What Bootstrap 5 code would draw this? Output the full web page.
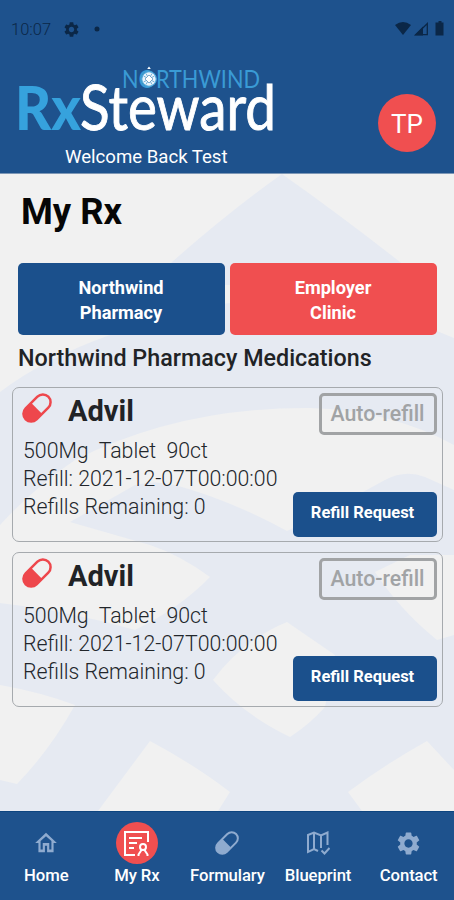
<!DOCTYPE html>
<html lang="en">
<head>
<meta charset="utf-8">
<meta name="viewport" content="width=device-width, initial-scale=1">
<title>My Rx</title>
<link href="https://cdn.jsdelivr.net/npm/bootstrap@5.3.0/dist/css/bootstrap.min.css" rel="stylesheet">
<style>
body{font-family:Roboto,"Liberation Sans",sans-serif;height:900px;overflow:hidden;background:#f1f1f1;color:#212326;line-height:1}
svg{display:block;flex:none}
.top-area{height:174px;background:#1e528d;border-bottom:1px solid #7d97b6;color:#fff}
.status{height:58px;padding:0 9px 0 11px;color:#0b2747}
.clock{font-size:16.5px;font-weight:300;width:53px;padding-top:2px}
.status-dot{margin-left:15px}
.brand-row{height:115px;padding:7px 18px 0 18px}
.wordmark{overflow:visible;font-family:Lato,sans-serif}
.welcome{font-size:18.6px;padding-left:47px;margin-top:13px;white-space:nowrap}
.avatar{width:58px;height:58px;background:#f04f50;font-size:26px;margin-top:29px;padding-top:2px}
.main-area{height:637px}
.backdrop{left:0;top:0;z-index:-1}
.content-col{padding:0 11px 0 12px}
.page-title{font-size:36.4px;font-weight:700;color:#060606;margin:20px 0 0 9px;height:69px;line-height:36px}
.switch-row{gap:5px;padding:0 6px}
.switch-row .btn{height:72px;border:0;border-radius:5px;font-size:18.2px;font-weight:700;line-height:25px;color:#fff;padding:8px 13px 6px 12px}
.fill-blue{background:#1b508c!important}
.fill-red{background:#f04f50!important}
.section-title{font-size:23.3px;font-weight:500;margin:11px 0 17px 6px;line-height:24px;white-space:nowrap}
.med{height:155px;border:1px solid #a6aaae;border-radius:7px;background:transparent;padding:5px 5.5px 4.5px 9px;margin-bottom:9.5px}
.med-name{font-size:29px;font-weight:700;margin-left:16px;line-height:36px}
.auto-btn{width:118px;height:42px;border:3px solid #a2a4a6;border-radius:5px;color:#a1a3a5!important;font-size:21.3px;font-weight:500;opacity:1!important;padding:0;background:#eef0f333}
.med-info{font-size:21.3px;font-weight:300;line-height:28.2px;color:#22262b;white-space:pre;margin:8px 0 0 1px}
.request-btn{width:144px;height:45px;border:0;border-radius:5px;color:#fff;font-size:16.5px;font-weight:700;padding:0 4px 2px 0}
.tabs{height:89px;background:#1e528d;border-top:1px solid #0d4580;padding:10px 0 0 1px}
.tabs a{width:90.6px;color:#fff}
.tab-label{font-size:16.7px;font-weight:500;letter-spacing:-.1px;line-height:23px;white-space:nowrap}
.tab-icon{height:42px;width:42px;color:#8fabcf}
.tab-icon.current{color:#fff;background:#f04f50}
</style>
<script src="https://cdn.jsdelivr.net/npm/bootstrap@5.3.0/dist/js/bootstrap.bundle.min.js"></script>
</head>
<body class="d-flex flex-column">
<svg width="0" height="0" class="position-absolute"><defs>
<symbol id="gear" viewBox="2 2 20 20"><path fill="currentColor" d="M19.14 12.94c.04-.3.06-.61.06-.94 0-.32-.02-.64-.07-.94l2.03-1.58c.18-.14.23-.41.12-.61l-1.92-3.32c-.12-.22-.37-.29-.59-.22l-2.39.96c-.5-.38-1.03-.7-1.62-.94l-.36-2.54c-.04-.24-.24-.41-.48-.41h-3.84c-.24 0-.43.17-.47.41l-.36 2.54c-.59.24-1.13.57-1.62.94l-2.39-.96c-.22-.08-.47 0-.59.22L2.74 8.87c-.12.21-.08.47.12.61l2.03 1.58c-.05.3-.09.63-.09.94s.02.64.07.94l-2.03 1.58c-.18.14-.23.41-.12.61l1.92 3.32c.12.22.37.29.59.22l2.39-.96c.5.38 1.03.7 1.62.94l.36 2.54c.05.24.24.41.48.41h3.84c.24 0 .44-.17.47-.41l.36-2.54c.59-.24 1.13-.56 1.62-.94l2.39.96c.22.08.47 0 .59-.22l1.92-3.32c.12-.22.07-.47-.12-.61l-2.01-1.58zM12 15.6c-1.98 0-3.6-1.62-3.6-3.6s1.62-3.6 3.6-3.6 3.6 1.62 3.6 3.6-1.62 3.6-3.6 3.6z"/></symbol>
<symbol id="pill" viewBox="0 0 30 30"><g transform="rotate(45 15 15)"><rect x="7.300" y="-1" width="15.400" height="32" rx="7.700" fill="none" stroke="currentColor" stroke-width="2.500"/><path d="M7.500 15.500h15v8a7.500 7.500 0 0 1-15 0z" fill="currentColor"/></g></symbol>
</defs></svg>

<header class="top-area flex-shrink-0">
  <div class="status d-flex align-items-center justify-content-between">
    <div class="d-flex align-items-center"><span class="clock">10:07</span>
      <svg width="15" height="15"><use href="#gear"/></svg>
      <svg class="status-dot" width="6" height="6"><circle cx="3" cy="3" r="2.500" fill="currentColor"/></svg></div>
    <svg width="51" height="16" viewBox="0 0 51 16"><path d="M1 4Q9-2 17 4L9 14z" fill="currentColor"/><path d="M20 14.500 29 5.500V14.500z" fill="currentColor"/><path d="M22 13.700 33.300 2.500V13.700z" fill="none" stroke="currentColor" stroke-width="1.300"/><path d="M42.500 1.500h2V0h3v1.500h2V14.500h-8v-13z" fill="currentColor"/></svg>
  </div>
  <div class="brand-row d-flex justify-content-between">
    <div>
      <svg class="wordmark" width="258" height="70" viewBox="18 65 258 70" role="img" aria-label="Northwind RxSteward">
        <text x="15" y="130" font-size="61" font-weight="900" fill="#36a2dd" textLength="66" lengthAdjust="spacingAndGlyphs">Rx</text>
        <text x="80" y="130" font-size="61" fill="#fff" stroke="#fff" stroke-width=".9" textLength="196" lengthAdjust="spacingAndGlyphs">Steward</text>
        <text x="122" y="88" font-size="25" fill="#3a9bd5" textLength="138" lengthAdjust="spacingAndGlyphs">NORTHWIND</text>
        <circle cx="149" cy="79" r="7.300" fill="#e8f3fb" stroke="#4aa5dc" stroke-width="1.200"/>
        <path d="M149 66.500l1.800 2.500h-3.600z" fill="#fff"/><path d="M143.500 76l11 6M154.500 76l-11 6M146 73.500l6 11M152 73.500l-6 11" stroke="#5aa2d0" stroke-width=".8"/><path d="M149 75l4 4-4 4-4-4z" fill="#fff" stroke="#518db9" stroke-width=".7"/>
      </svg>
      <div class="welcome">Welcome Back Test</div>
    </div>
    <div class="avatar rounded-circle d-flex align-items-center justify-content-center">TP</div>
  </div>
</header>

<main class="main-area position-relative z-0 flex-shrink-0">
  <svg class="backdrop position-absolute" width="454" height="637" viewBox="0 174 454 637" fill="#e6eaf2">
    <path d="M282 174 Q230 211 172 262L150 285H430L400 262Q340 215 282 174z"/>
    <path d="M0 392Q45 358 110 335Q190 300 280 300Q370 302 454 338V445Q390 410 310 408Q180 407 75 460Q35 487 0 525z"/>
    <path d="M70 522 135 485Q155 480 175 485Q230 500 287 531Q340 505 385 480Q405 469 425 477L454 490V555H410L375 572Q400 610 437 640L454 635V770L427 741Q384 765 348 792L362 811H218L230 792Q195 765 150 741L98 811H0V780L17 784Q50 750 75 705Q40 692 0 685V603Q65 610 135 630 180 608 210 577 180 555 150 545z"/>
    <path d="M287 622 335 655 325 707Q310 724 290 737 244 715 213 680 243 640 287 622z" fill="#f1f1f1"/>
  </svg>
  <div class="content-col overflow-hidden">
    <h1 class="page-title">My Rx</h1>
    <div class="switch-row d-flex">
      <button class="btn fill-blue flex-fill w-50">Northwind<br>Pharmacy</button>
      <button class="btn fill-red flex-fill w-50">Employer<br>Clinic</button>
    </div>
    <h2 class="section-title">Northwind Pharmacy Medications</h2>

    <section class="med d-flex justify-content-between">
      <div>
        <div class="d-flex"><svg width="30" height="30" color="#ee474c"><use href="#pill"/></svg><div class="med-name">Advil</div></div>
        <div class="med-info">500Mg  Tablet  90ct
Refill: 2021-12-07T00:00:00
Refills Remaining: 0</div>
      </div>
      <div class="d-flex flex-column justify-content-between align-items-end">
        <button class="btn auto-btn" disabled>Auto-refill</button>
        <button class="btn request-btn fill-blue">Refill Request</button>
      </div>
    </section>
    <section class="med d-flex justify-content-between">
      <div>
        <div class="d-flex"><svg width="30" height="30" color="#ee474c"><use href="#pill"/></svg><div class="med-name">Advil</div></div>
        <div class="med-info">500Mg  Tablet  90ct
Refill: 2021-12-07T00:00:00
Refills Remaining: 0</div>
      </div>
      <div class="d-flex flex-column justify-content-between align-items-end">
        <button class="btn auto-btn" disabled>Auto-refill</button>
        <button class="btn request-btn fill-blue">Refill Request</button>
      </div>
    </section>
  </div>
</main>

<nav class="tabs d-flex flex-shrink-0">
  <a class="d-flex flex-column align-items-center text-decoration-none"><span class="tab-icon d-flex align-items-center justify-content-center"><svg width="26" height="26" viewBox="0 0 24 24"><path fill="currentColor" d="M12 5.700l5 4.500V18h-2v-6H9v6H7v-7.800l5-4.500M12 2.500L2 12h3v8.500h6v-6h2v6h6V12h3L12 2.500z"/></svg></span><span class="tab-label">Home</span></a>
  <a class="d-flex flex-column align-items-center text-decoration-none"><span class="tab-icon current rounded-circle d-flex align-items-center justify-content-center"><svg width="27" height="27" viewBox="0 0 27 27" fill="none" stroke="currentColor" stroke-width="2"><path d="M12 25H2V2h23v10M6 8h13M6 13h8M6 18h5"/><circle cx="20" cy="17" r="3"/><path d="M15.500 26v-1.500l3-4.500M24.500 26v-1.500l-3-4.500"/></svg></span><span class="tab-label">My Rx</span></a>
  <a class="d-flex flex-column align-items-center text-decoration-none"><span class="tab-icon d-flex align-items-center justify-content-center"><svg width="24" height="24"><use href="#pill"/></svg></span><span class="tab-label">Formulary</span></a>
  <a class="d-flex flex-column align-items-center text-decoration-none"><span class="tab-icon d-flex align-items-center justify-content-center"><svg width="24" height="24" viewBox="0 0 24 24" fill="none" stroke="currentColor" stroke-width="2"><path d="M12 20l-4-2-6 3V4l6-2.500 7 3 6.500-3V14M8 2v16M15 4.500V17M15.500 19.500l3 3 5-5.500"/></svg></span><span class="tab-label">Blueprint</span></a>
  <a class="d-flex flex-column align-items-center text-decoration-none"><span class="tab-icon d-flex align-items-center justify-content-center"><svg width="23" height="23"><use href="#gear"/></svg></span><span class="tab-label">Contact</span></a>
</nav>
</body>
</html>
